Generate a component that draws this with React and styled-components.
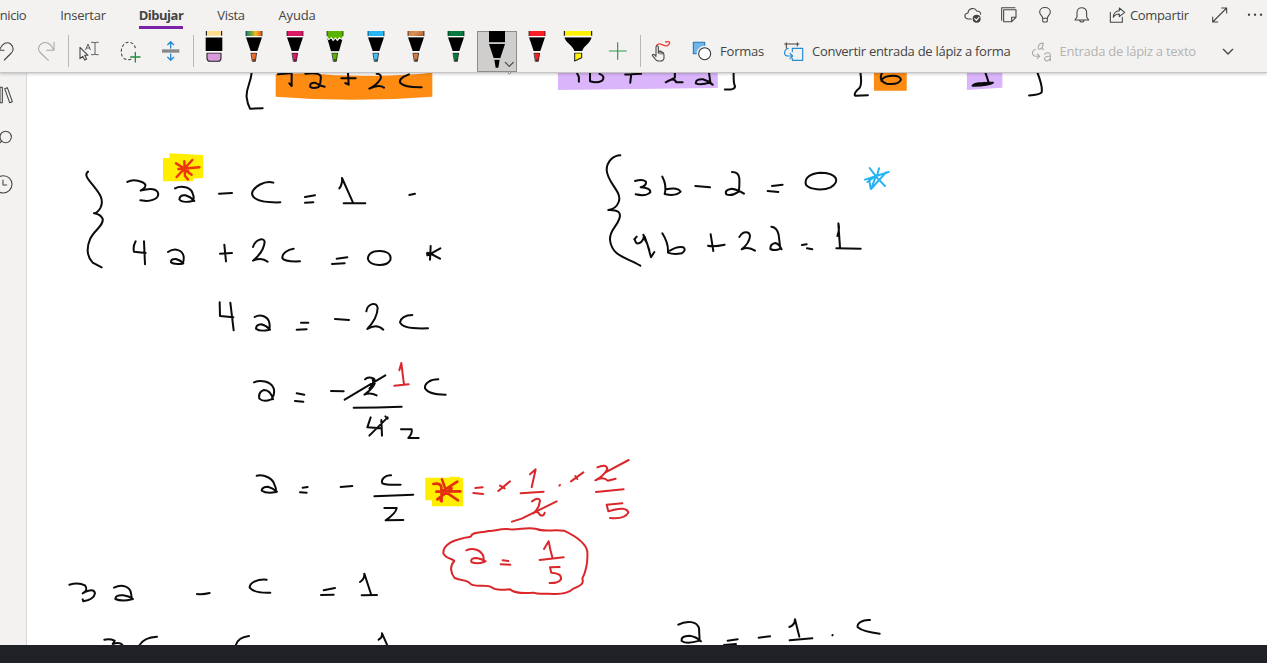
import React from "react";
import styled, { createGlobalStyle } from "styled-components";

const Global = createGlobalStyle`
  *, *::before, *::after { box-sizing: border-box; }
  body {
    margin: 0;
    overflow: hidden;
    background: #fff;
    color: #444;
    font-family: "Open Sans", "Noto Sans", sans-serif;
    font-size: 13px;
  }
`;

const Page = styled.div`
  width: 1267px;
  height: 663px;
  display: flex;
  flex-direction: column;
  overflow: hidden;
`;

const Ribbon = styled.header`
  flex: none;
  height: 73px;
  background: #f3f2f1;
  border-bottom: 1px solid #c6c5c5;
  box-shadow: 0 1px 3px rgba(0, 0, 0, 0.22);
  z-index: 1;
`;

const TabRow = styled.div`
  height: 31px;
  display: flex;
  justify-content: space-between;
`;

const Tabs = styled.nav`
  display: flex;
`;

const Tab = styled.div`
  width: ${(p) => p.$w}px;
  margin-right: ${(p) => p.$gap || 0}px;
  display: flex;
  flex-direction: column;
  align-items: center;
  padding-top: 6px;
  line-height: 18px;
  font-weight: ${(p) => (p.$active ? 700 : 400)};
  letter-spacing: ${(p) => p.$track}px;
  white-space: nowrap;

  &::after {
    content: "";
    width: ${(p) => (p.$active ? 44 : 0)}px;
    height: 3px;
    margin-top: 2px;
    background: #7a22a8;
  }
`;

const Actions = styled.div`
  display: flex;
  margin-right: -6px;
`;

const ToolRow = styled.div`
  height: 41px;
  display: flex;
`;

const Divider = styled.i`
  flex: none;
  width: 1px;
  height: 32px;
  margin-top: 4px;
  background: #b9b8b8;
`;

const Pens = styled.div`
  display: flex;
  flex: none;
  margin: 0 0 0 -0.5px;
  width: 404.5px;
`;

const Pen = styled.div`
  flex: 1;
  height: 41px;
  display: flex;
  justify-content: center;
  background: ${(p) => (p.$selected ? "#cfcecd" : "transparent")};
  box-shadow: ${(p) => (p.$selected ? "inset 0 0 0 1px #8c8c8c" : "none")};
`;

const Label = styled.span`
  flex: none;
  width: ${(p) => p.$w}px;
  padding-top: ${(p) => p.$top}px;
  line-height: 18px;
  letter-spacing: ${(p) => p.$track}px;
  color: ${(p) => (p.$disabled ? "#b3b2b1" : "#444")};
  white-space: nowrap;
`;

const Body = styled.div`
  height: 572px;
  display: flex;
`;

const Side = styled.aside`
  flex: none;
  width: 27px;
  background: #f3f2f1;
  border-right: 1px solid #d9d8d8;
`;

const Sheet = styled.main`
  flex: 1;
  background: #fff;
`;

const Footer = styled.footer`
  flex: none;
  height: 18px;
  background: #202126;
`;

const Drawing = styled.svg`
  display: block;
  flex: none;
  overflow: ${(p) => (p.$spill ? "visible" : "hidden")};
  fill: none;
  stroke: ${(p) => p.$color || "#444"};
  stroke-width: ${(p) => p.$weight || 3.2};
  stroke-linecap: round;
  stroke-linejoin: round;
`;

/* Icons and ink are plotted on a grid of three units per pixel. */
function Icon({ x, y = 93, w, h = 41, color, weight, spill, children }) {
  return (
    <Drawing width={w} height={h} viewBox={`${x} ${y} ${w * 3} ${h * 3}`} $color={color} $weight={weight} $spill={spill}>
      {children}
    </Drawing>
  );
}

function TipPen({ cap, tip = cap, jagged, edge }) {
  return (
    <Icon x={-60} w={40}>
      <g stroke="none">
        <rect x="-24" y="93" width="48" height="15" fill={cap} />
        <path d="M-24 93V108M24 93V108" stroke="#000" strokeWidth="2" />
        {jagged ? (
          <g>
            <path d="M-24 108H24L20 118L13 112L8 120L1 113L-5 121L-11 112L-18 119Z" fill={cap} />
            <path d="M-24 112L-19 121L-12 115L-6 124L1 116L7 124L14 116L22 119L12 154H-12Z" fill="#000" />
            <path d="M-24 110L-18 119L-11 112L-5 121L1 113L8 120L13 112L20 118L24 110" stroke="#fff" strokeWidth="2.5" fill="none" />
          </g>
        ) : (
          <path d="M-24 112H24L10 153H-10Z" fill="#000" />
        )}
        <path d="M-8 159H8L4 184H-4Z" fill={tip} stroke={edge || "#000"} strokeWidth="2" />
        <path d="M-24 110H24" stroke={jagged ? "none" : "#fff"} strokeWidth="3" />
        <path d="M-10 156H10" stroke="#fff" strokeWidth="3" />
        <path d="M-4 177H4L2 184H-2Z" fill="#222" opacity=".55" />
      </g>
    </Icon>
  );
}

const BLACK = "#0b0b0b";
const RED = "#d9272b";

const highlights = [
  { at: [190, 20], color: "#ff8c12", d: "M257 158V162L360 160Q490 174 690 162L727 158V230Q490 249 257 230Z" },
  { at: [540, 60], k: 0.338, color: "#dbb5fb", d: "M53 36H526V83L53 89Z M1263 36H1368V82L1263 89Z" },
  { at: [540, 60], k: 0.338, color: "#ff8c12", d: "M988 36H1085V91H988Z" },
  { at: [0, 70], color: "#ffee00", d: "M489 264H508V250L609 255V324L579 326V334H489Z" },
  { at: [410, 440], color: "#ffee00", d: "M46 113H118V110H150V114H159V199H66V181H46Z" },
];

const ink = [
  {
    at: [190, 20],
    d: [
      "M185 156C184 186 167 205 170 232C172 250 178 262 180 266L218 265",
      "M264 163L300 160M305 160V198L298 190",
      "M346 161Q385 156 392 168Q394 188 386 201Q370 207 361 201Q358 188 374 188Q386 192 388 196L404 200",
      "M454 175H497M474 160L476 194L466 189",
      "M560 161Q577 162 571 178Q560 196 538 206Q566 192 582 203",
      "M657 163Q624 175 631 189Q645 203 695 202",
    ],
  },
  {
    at: [540, 60],
    k: 0.338,
    d: [
      "M110 40L115 50V64",
      "M148 38V63Q168 70 184 61Q194 48 176 41",
      "M252 43L299 41M270 42L267 67",
      "M399 38V52L372 66Q396 50 403 66L422 66",
      "M500 38L504 66Q475 76 461 69Q460 56 482 57Q500 62 511 73",
      "M573 38Q572 70 577 78Q576 90 547 87",
      "M948 38Q953 70 946 82Q926 99 933 106L970 104",
      "M1012 38Q1000 60 1025 70Q1060 75 1068 58Q1065 44 1035 47Q1012 50 1010 62",
      "M1318 38L1328 68M1280 76Q1286 68 1310 68L1340 67Q1330 75 1280 76",
      "M1472 38Q1488 80 1484 96Q1478 103 1447 105",
    ],
  },
  {
    at: [0, 70],
    d: [
      "M264 305C250 315 268 332 284 352C300 372 312 390 302 412Q294 428 282 430Q300 432 308 446C312 468 282 480 270 508C258 535 262 562 278 578L305 592",
      "M382 336Q400 326 426 336Q446 345 428 358L422 362Q462 350 473 366Q482 388 440 393L421 391",
      "M525 355C545 345 572 352 578 370Q584 385 578 393Q545 400 538 388Q540 374 556 376Q572 380 583 393",
      "M657 371L696 369",
      "M407 514Q398 530 402 545L437 549M432 514L435 583",
      "M504 546C525 532 548 540 551 560Q552 572 548 581Q520 584 513 577Q512 566 528 567Q542 571 550 580",
      "M660 551L696 549M673 524L678 574",
    ],
  },
  {
    at: [200, 140],
    d: [
      "M220 128C195 120 160 140 156 160C158 185 200 188 241 187",
      "M315 171L345 166M315 188L340 187",
      "M418 145Q428 132 426 114L459 188M431 190H496",
      "M628 165L645 161",
      "M159 321C165 300 190 290 194 305Q192 335 159 362Q185 350 203 365",
      "M281 326C262 328 246 342 247 354Q252 366 300 364",
      "M410 356L442 352M396 372L434 370",
      "M535 333C515 333 502 345 504 358C510 378 560 382 571 360C576 340 555 331 535 333Z",
      "M692 318L690 359M681 341L694 340L721 325M694 342L720 356M682 346L694 342M682 338L700 345",
      "M59 487L60 528L100 532M91 488L101 571",
      "M164 531C182 520 204 530 208 548Q210 560 208 569Q180 576 168 566Q168 554 184 553Q198 556 210 569",
      "M303 548H325M290 569L320 568",
      "M405 537L447 540",
      "M499 514C502 492 530 482 533 504Q532 535 502 567Q530 550 550 569",
      "M637 525C615 525 602 535 600 547Q606 568 684 565",
    ],
  },
  {
    at: [590, 140],
    d: [
      "M91 46C70 46 50 65 50 90C52 130 98 155 86 186Q78 207 55 210Q98 208 88 236C80 262 58 270 60 300C66 350 110 352 151 377",
      "M135 123Q158 116 168 125Q170 138 152 142Q182 144 181 157Q168 170 137 163",
      "M217 110Q231 135 224 162Q258 170 272 155Q264 140 228 148",
      "M316 138L360 142",
      "M426 96Q446 96 448 115Q449 140 446 155Q425 170 409 163Q402 150 425 146Q444 148 462 161",
      "M546 138L578 134M533 153L565 156",
      "M690 98C660 100 642 115 648 135C660 150 700 152 722 142C752 125 742 98 690 98Z",
      "M133 298L140 290M134 296Q136 312 146 310Q160 306 162 287M160 284Q164 300 172 312L183 352L193 336M164 290L178 330",
      "M217 280Q236 310 234 338Q250 345 275 340Q290 330 280 322Q262 318 240 332",
      "M354 317Q370 321 404 314M362 283L370 333",
      "M448 291C460 272 478 274 480 288Q478 310 455 328Q475 318 495 332",
      "M544 260Q562 262 566 285L571 326Q555 334 541 327Q540 312 556 309Q568 312 575 328",
      "M636 315L650 313M651 325L667 328",
      "M742 288Q750 266 745 250L750 322M739 325L812 326",
    ],
  },
  {
    at: [590, 140],
    color: "#24b4f2",
    d: ["M839 84L860 112L867 85M825 119L896 96M888 97L843 147L858 108M860 112L885 138M842 146L838 121M832 126L858 108"],
  },
  {
    at: [240, 340],
    d: [
      "M42 127C60 120 92 122 101 145Q106 165 94 178Q70 188 58 176Q54 156 72 150Q92 150 99 178",
      "M170 160L193 164M165 183L190 185",
      "M273 153L311 154",
      "M314 179L436 106M375 118Q384 108 402 116Q412 128 390 150L373 164Q390 156 410 166M398 118Q404 130 388 146",
      "M341 203Q410 203 485 200",
      "M595 118C570 118 553 130 555 145Q565 164 617 164",
      "M392 232L382 262L422 265M424 240L426 287M443 232L388 287M436 229L443 236",
      "M483 268H515Q518 280 505 294L536 294",
      "M50 407C72 402 100 415 104 436Q110 446 108 456Q80 462 65 452Q66 440 84 440Q98 444 111 455",
      "M188 443L203 441M180 457L200 458",
      "M302 441L337 438",
      "M453 406C435 405 422 418 427 430Q440 436 482 434",
      "M403 469L520 464",
      "M433 504H470Q468 520 437 541L490 540",
    ],
  },
  { at: [240, 340], color: RED, d: ["M478 91L484 69L492 134M463 137L506 133"] },
  { at: [0, 70], color: "#ee3510", weight: 7.5, d: ["M528 280L565 303M530 321L577 270M553 274L555 318L564 328M535 297L598 292M560 304L575 314"] },
  { at: [410, 440], color: "#e5300f", weight: 8, d: ["M70 132Q90 128 94 140L95 184M79 155L151 154M92 182L100 152L142 125M96 118L110 158L144 181M82 178L125 145"] },
  {
    at: [410, 440],
    color: RED,
    d: [
      "M196 144L218 142M190 159L219 162",
      "M265 153L300 124M270 137L284 145",
      "M360 103L377 88L365 142M332 160L401 155",
      "M448 137L450 135",
      "M483 124L520 97M496 108L502 117",
      "M366 184Q385 170 390 182Q388 205 370 220Q382 210 390 225Q402 230 404 218M306 245L335 236L440 184",
      "M562 82Q590 70 592 88Q580 110 556 121Q580 108 593 122L617 116M585 98L656 60",
      "M558 156L641 148",
      "M637 190L590 194L595 214Q650 196 655 218Q645 238 600 234",
      "M169 331C190 322 212 330 220 348L222 366Q200 374 184 366Q180 354 200 354Q214 357 227 364",
      "M278 361L295 363M272 373L301 374",
      "M402 327L416 304Q420 328 427 352M389 360L461 352",
      "M449 381L420 382L424 398Q456 400 453 418Q445 430 419 429",
      "M182 290C155 294 98 306 100 340C108 358 128 354 133 363C118 378 122 400 134 414C150 422 170 418 180 430C192 445 230 430 245 442C260 455 280 448 300 448C315 462 345 460 370 458C392 466 405 458 430 462C455 463 478 458 490 446C515 436 522 430 517 416C530 390 534 370 532 335C528 310 500 290 462 272C430 268 400 276 380 267C350 260 330 270 300 268C270 264 250 276 235 273C215 280 188 272 182 290Z",
    ],
  },
  {
    at: [50, 550],
    d: [
      "M58 104Q85 96 105 106Q116 120 98 130Q132 112 135 130Q132 148 100 154L98 148",
      "M192 113C215 102 240 108 243 130L246 148Q215 156 196 147Q196 134 220 136Q236 138 249 147",
      "M441 132Q460 134 479 129",
      "M650 89C620 86 598 100 599 113Q612 130 661 128",
      "M821 121L855 114M813 135L851 134",
      "M930 96Q944 88 943 71L963 132M935 136L981 135",
      "M163 269Q180 266 194 272L188 282Q210 274 218 286",
      "M321 260Q280 262 267 288",
      "M597 258Q562 262 557 288",
      "M986 269Q998 262 996 250L1012 286",
    ],
  },
  {
    at: [640, 590],
    d: [
      "M115 104C140 90 172 94 177 115L179 152Q140 164 125 153Q122 138 148 137Q168 139 183 154",
      "M263 152L293 148M252 165L288 162",
      "M356 143L390 139",
      "M448 111Q464 106 465 88L478 140M449 151L517 145",
      "M577 136L578 135",
      "M690 90C668 88 650 100 653 112Q670 126 719 131",
    ],
  },
];

function place({ at, k = 0.33333 }) {
  return `translate(${at}) scale(${k})`;
}

function Notebook() {
  return (
    <Drawing width="1240" height="572" viewBox="27 73 1240 572">
      {highlights.map((m, i) => (
        <path key={i} d={m.d} fill={m.color} stroke="none" transform={place(m)} />
      ))}
      {ink.map((g, i) => (
        <g key={i} transform={place(g)} stroke={g.color || BLACK} strokeWidth={g.weight || 6}>
          {g.d.map((d) => (
            <path key={d} d={d} />
          ))}
        </g>
      ))}
    </Drawing>
  );
}

export default function App() {
  return (
    <Page>
      <Global />
      <Ribbon>
        <TabRow>
          <Tabs>
            <Tab $w={26} $gap={18} $track={-0.4}>nicio</Tab>
            <Tab $w={78} $track={-0.25}>Insertar</Tab>
            <Tab $w={78} $track={-0.5} $active>Dibujar</Tab>
            <Tab $w={62} $track={-0.3}>Vista</Tab>
            <Tab $w={70} $track={-0.2}>Ayuda</Tab>
          </Tabs>
          <Actions>
            <Icon x={525} y={0} w={36} h={31}>
              <path d="M574 57H564C552 55 551 41 564 39C565 25 584 20 590 33C598 33 602 38 602 43" />
              <circle cx="590" cy="56" r="12" fill="#444" stroke="none" />
              <path d="M584 56L589 61L597 52" stroke="#fff" />
            </Icon>
            <Icon x={633} y={0} w={36} h={31}>
              <path d="M665 61V23H705M671 29H708V52L695 65H671ZM708 52H695V65" />
            </Icon>
            <Icon x={741} y={0} w={36} h={31}>
              <path d="M788 55C788 47 779 45 779 36C779 18 811 18 811 36C811 45 802 47 802 55ZM788 55V62Q788 66 792 66H798Q802 66 802 62V55" />
            </Icon>
            <Icon x={849} y={0} w={36} h={31}>
              <path d="M885 60H926L920 51V38C920 18 891 18 891 38V51ZM899 61C900 68 911 68 912 61" />
            </Icon>
            <Icon x={957} y={0} w={31} h={31}>
              <path d="M991 37V67H1027V52M1018 24L1034 37L1018 50V42C1008 42 1003 46 1000 52C1000 40 1008 32 1018 32Z" />
            </Icon>
            <Label $w={71} $top={6} $track={-0.35}>Compartir</Label>
            <Icon x={1263} y={0} w={36} h={31}>
              <path d="M1298 66L1340 24M1325 24H1340V39M1298 51V66H1313" />
            </Icon>
            <Icon x={1371} y={0} w={36} h={31}>
              <path d="M1407 44h.1M1425 44h.1M1443 44h.1" strokeWidth="7" />
            </Icon>
          </Actions>
        </TabRow>
        <ToolRow>
          <Icon x={0} w={25}>
            <path d="M-2 151C8 127 22 125 32 132C42 142 42 150 34 159L13 180M-4 151H12" />
          </Icon>
          <Icon x={75} w={43} color="#a9a8a7">
            <path d="M162 127V151H140M161 150C150 126 136 124 124 131C112 141 114 152 122 159L145 181" />
          </Icon>
          <Divider />
          <Icon x={207} w={40}>
            <path d="M240 142V176L248 169L254 180L260 177L254 166H264Z" />
            <path d="M257 149L264 132L271 149M260 144H268M274 127H282L285 129L288 127H295M285 129V162M274 164H282L285 162L288 164H295" strokeWidth="2.5" />
          </Icon>
          <Icon x={327} w={42}>
            <path d="M394 178C370 184 362 166 364 151C368 120 402 118 407 148" strokeDasharray="9 6" strokeLinecap="butt" />
            <path d="M406 157V186M392 171H420" stroke="#1f8f3d" strokeWidth="4" />
          </Icon>
          <Icon x={453} w={42}>
            <path d="M486 153H538" stroke="#888" strokeWidth="10" strokeLinecap="butt" />
            <path d="M512 144V126M503 134L512 125L521 134M512 162V180M503 172L512 181L521 172" stroke="#258bd2" strokeWidth="4" />
          </Icon>
          <Divider />
          <Pens>
            <Pen>
              <Icon x={-60} w={40}>
                <path d="M-22 93H22V107H-22Z" fill="#ffdb8c" stroke="none" />
                <path d="M-23 93V107M23 93V107" stroke="#000" strokeWidth="3" strokeLinecap="butt" />
                <path d="M-25 112H25V153H-25Z" fill="#000" stroke="none" />
                <path d="M-21 159H21V176Q20 184 12 184H-12Q-20 184 -21 176Z" fill="#d79bdc" stroke="#222" />
                <path d="M-24 110H24M-24 156H24" stroke="#fff" />
              </Icon>
            </Pen>
            <Pen><TipPen cap="url(#rainbow)" tip="#ed6b2b" /></Pen>
            <Pen><TipPen cap="#dc1766" /></Pen>
            <Pen><TipPen cap="#59b300" jagged /></Pen>
            <Pen><TipPen cap="#28b7f5" tip="#45bff0" /></Pen>
            <Pen><TipPen cap="url(#copper)" tip="#cf7c43" /></Pen>
            <Pen><TipPen cap="#087a40" /></Pen>
            <Pen $selected>
              <Icon x={-60} w={40} spill>
                <g fill="#000" stroke="none">
                  <path d="M-24 93H24V127H-24ZM-24 132H24L10 174H-10ZM-8 179H8L4 203H-4Z" />
                  <path d="M-24 129H24M-10 177H10" stroke="#b9c0c0" strokeWidth="2.5" />
                </g>
                <path d="M25 187L37 199L49 187" strokeWidth="3.5" />
                <circle cx="37" cy="218" r="3.5" fill="#fff" stroke="#777" strokeWidth="2.5" />
              </Icon>
            </Pen>
            <Pen><TipPen cap="#fb1e24" /></Pen>
            <Pen>
              <Icon x={-60} w={40}>
                <path d="M-41 93H41V107H-41Z" fill="#fff200" stroke="none" />
                <path d="M-41 93V107M41 93V107" stroke="#000" strokeLinecap="butt" />
                <path d="M-41 112H41C36 132 16 138 13 153H-11C-15 137 -36 130 -41 112Z" fill="#000" stroke="none" />
                <path d="M-10 159H11V173L-10 183Z" fill="#fff200" stroke="#222" />
                <path d="M-41 110H41M-12 156H13" stroke="#fff" />
              </Icon>
            </Pen>
          </Pens>
          <Icon x={384} w={42} color="#2f9b55" weight={3.6}>
            <path d="M443 128V178M418 153H469" />
          </Icon>
          <Divider />
          <Icon x={513} w={39}>
            <path d="M560 136C568 122 582 142 592 137C600 132 602 124 594 125L587 126" stroke="#ee3a37" strokeWidth="4" />
            <path d="M558 166V141C558 136 565 136 565 141V155C570 151 575 153 575 157C580 155 583 160 582 175Q580 183 572 183H564Q558 182 554 175L547 166C548 161 554 163 558 169M565 154V160M570 154V161M576 157V163" />
          </Icon>
          <Icon x={630} w={40}>
            <path d="M670 127H704V161H670Z" fill="#6fb5ea" stroke="#2176bd" />
            <circle cx="704" cy="161" r="20" fill="#fff" stroke="#f3f2f1" strokeWidth="8" />
            <circle cx="704" cy="161" r="18" fill="#fff" stroke="#333" />
          </Icon>
          <Label $w={57} $top={11} $track={-0.2}>Formas</Label>
          <Icon x={-9} w={35}>
            <path d="M14 132H57M19 128V145M52 128V138" />
            <path d="M37 155V145H68V181H37V175M25 145C10 151 10 168 25 168H37M30 160L38 168L30 176" stroke="#258bd2" strokeWidth="3.5" />
          </Icon>
          <Label $w={211} $top={11} $track={-0.28}>Convertir entrada de lápiz a forma</Label>
          <Icon x={729} w={36.5} color="#aaa9a8">
            <path d="M790 130C776 126 770 148 778 148C785 147 789 136 790 130L786 145Q787 149 791 147" />
            <path d="M766 148C752 155 757 169 768 169H778M772 162L779 169L772 176" />
            <path d="M794 162C804 155 811 158 811 165V182M811 169C797 168 792 173 794 179C799 186 808 182 811 175" />
          </Icon>
          <Label $w={150.5} $top={11} $track={-0.26} $disabled>Entrada de lápiz a texto</Label>
          <Icon x={1290} w={36}>
            <path d="M1330 148L1344 162L1358 148" strokeWidth="4" />
          </Icon>
          <svg width="0" height="0">
            <linearGradient id="rainbow">
              <stop offset="0" stopColor="#17877c" />
              <stop offset=".35" stopColor="#7aa437" />
              <stop offset=".6" stopColor="#f5bd22" />
              <stop offset="1" stopColor="#e84e20" />
            </linearGradient>
            <linearGradient id="copper" x2="1" y2=".4">
              <stop offset="0" stopColor="#c77a43" />
              <stop offset=".5" stopColor="#d9935c" />
              <stop offset="1" stopColor="#b86a35" />
            </linearGradient>
          </svg>
        </ToolRow>
      </Ribbon>
      <Body>
        <Side>
          <Icon x={0} y={9} w={26} h={130}>
            <path d="M-6 52H7V98H-6ZM0 52V98M14 56L22 53L37 95L29 98Z" />
            <circle cx="17" cy="201" r="17" />
            <path d="M5 213L-6 224" />
            <circle cx="10" cy="343" r="26" />
            <path d="M9 330V345H20" />
          </Icon>
        </Side>
        <Sheet>
          <Notebook />
        </Sheet>
      </Body>
      <Footer />
    </Page>
  );
}
